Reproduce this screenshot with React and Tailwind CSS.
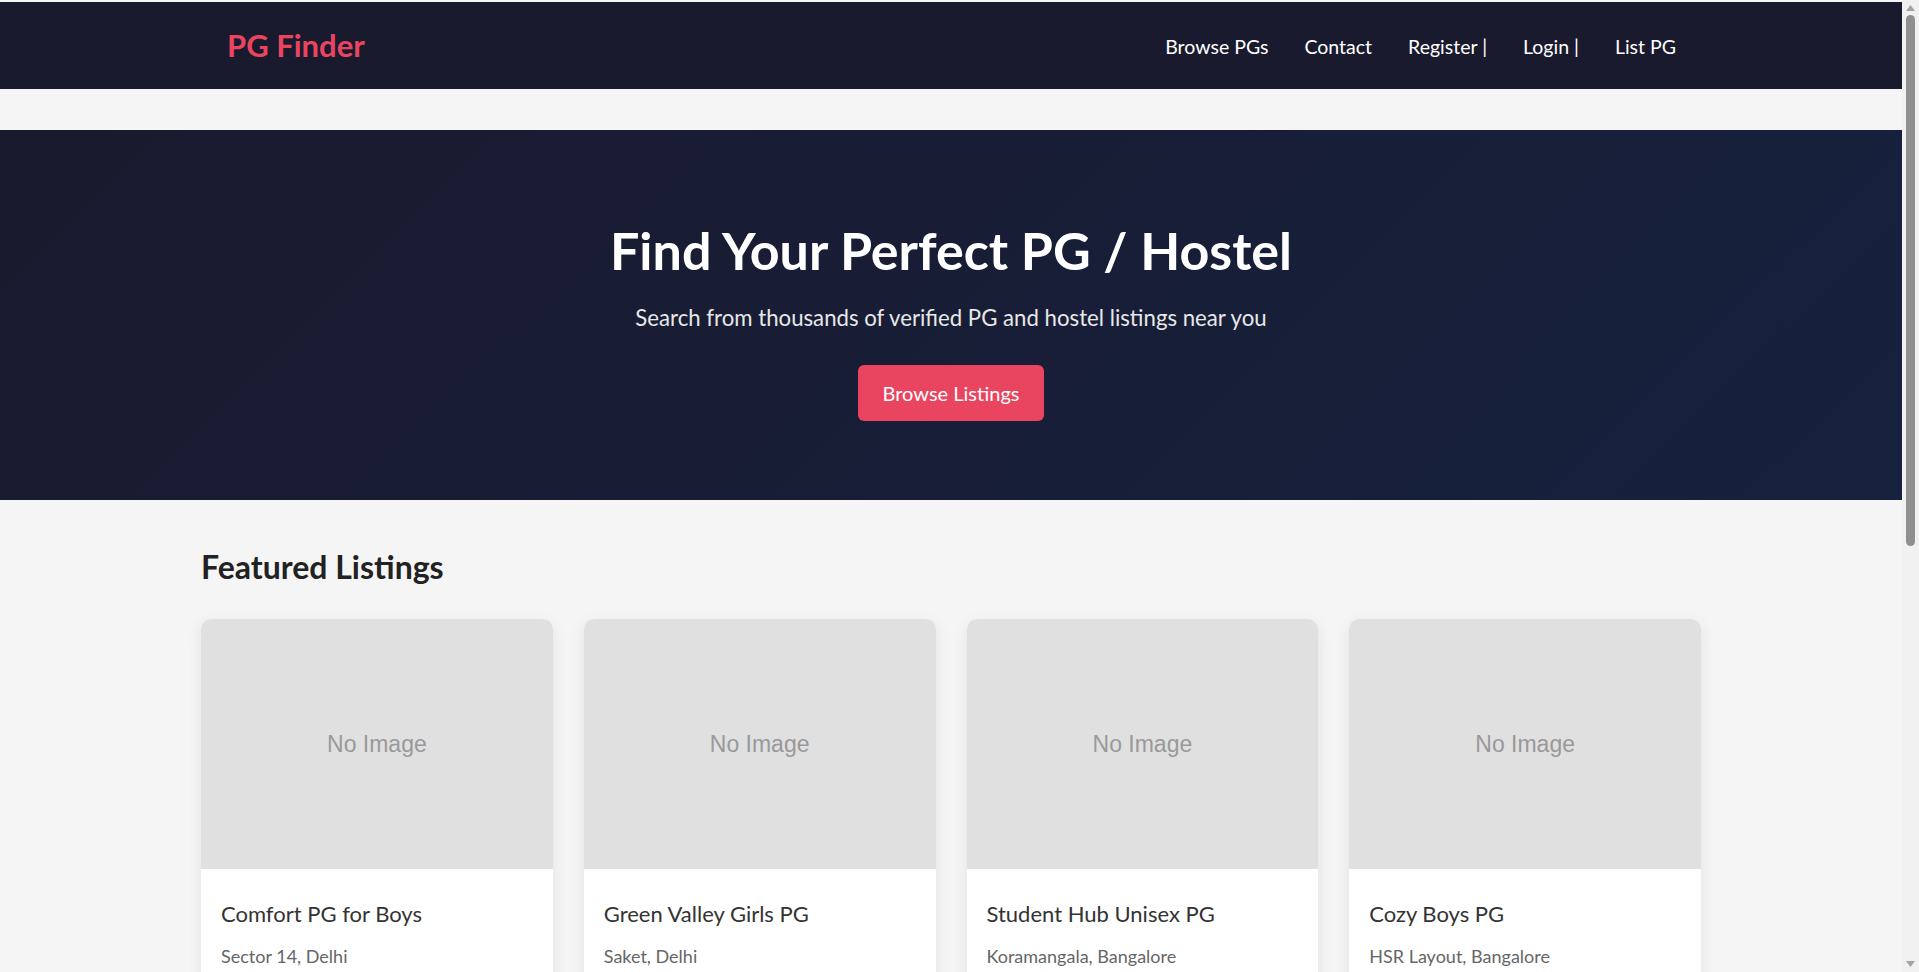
import React from 'react';

// Listings shown on the home page
const listings = [
    { id: 1, name: 'Comfort PG for Boys', location: 'Sector 14, Delhi', rent: '₹8,500 / month' },
    { id: 2, name: 'Green Valley Girls PG', location: 'Saket, Delhi', rent: '₹9,000 / month' },
    { id: 3, name: 'Student Hub Unisex PG', location: 'Koramangala, Bangalore', rent: '₹10,500 / month' },
    { id: 4, name: 'Cozy Boys PG', location: 'HSR Layout, Bangalore', rent: '₹7,800 / month' },
];

const Navbar = () => (
    <nav className="bg-[#1a1a2e] h-[87px]">
        <div className="max-w-[1500px] mx-auto h-full pl-[26px] pr-[25px] flex items-center justify-between">
            <a href="#" className="text-[#e94560] text-[31px] font-bold leading-none">PG Finder</a>
            <div className="mt-[3px] flex items-center gap-[36px] text-[19.5px] text-white">
                <a href="#">Browse PGs</a>
                <a href="#">Contact</a>
                <a href="#">Register |</a>
                <a href="#">Login |</a>
                <a href="#">List PG</a>
            </div>
        </div>
    </nav>
);

const Hero = () => (
    <section className="mt-[41px] h-[370px] bg-[linear-gradient(135deg,#1a1a2e,#16213e)] flex flex-col items-center pt-[89px]">
        <h1 className="text-white text-[52px] font-bold leading-[1.2]">Find Your Perfect PG / Hostel</h1>
        <p className="mt-[21px] text-[#e8e8e8] text-[22.2px] leading-[1.4]">
            Search from thousands of verified PG and hostel listings near you
        </p>
        <button className="mt-[32px] bg-[#e94560] text-white text-[20px] px-[24px] h-[56px] rounded-[6px]">
            Browse Listings
        </button>
    </section>
);

const ListingCard = ({ pg }) => (
    <div className="bg-white rounded-[10px] overflow-hidden shadow-[0_4px_15px_rgba(0,0,0,0.08)]">
        <div className="h-[250px] bg-[#e0e0e0] flex items-center justify-center">
            <span className="font-['Liberation_Sans',Arial,sans-serif] text-[23px] text-[#999]">No Image</span>
        </div>
        <div className="px-[20px] pt-[32px] pb-[24px]">
            <h3 className="text-[22px] text-[#333] leading-[1.2]">{pg.name}</h3>
            <p className="mt-[15px] text-[18px] text-[#666]">{pg.location}</p>
            <p className="mt-[14px] text-[18px] font-bold text-[#e94560]">{pg.rent}</p>
        </div>
    </div>
);

// Window scrollbar strip on the right edge
const ScrollTrack = () => (
    <div className="w-[17px] shrink-0 bg-[#f1f1f1] flex flex-col items-center pt-[5px] pb-[5px]">
        <svg width="9" height="6" viewBox="0 0 9 6" className="shrink-0">
            <path d="M4.5 0L9 6H0z" fill="#a3a3a3" />
        </svg>
        <div className="mt-[4px] w-[9px] h-[531px] rounded-full bg-[#8f8f8f]" />
        <div className="flex-1" />
        <svg width="9" height="6" viewBox="0 0 9 6" className="shrink-0">
            <path d="M0 0H9L4.5 6z" fill="#a3a3a3" />
        </svg>
    </div>
);

export default function App() {
    return (
        <div className="flex h-screen overflow-hidden bg-[#f5f5f5] font-['Segoe_UI',Lato,sans-serif]">
            <div className="flex-1 min-w-0 overflow-hidden pt-[2px]">
                <Navbar />
                <Hero />
                <main className="max-w-[1500px] mx-auto pt-[48px] pb-[60px]">
                    <h2 className="text-[32px] font-bold text-[#222] leading-[1.2]">Featured Listings</h2>
                    <div className="mt-[33px] grid grid-cols-4 gap-[31px]">
                        {listings.map(pg => (
                            <ListingCard key={pg.id} pg={pg} />
                        ))}
                    </div>
                </main>
            </div>
            <ScrollTrack />
        </div>
    );
}
